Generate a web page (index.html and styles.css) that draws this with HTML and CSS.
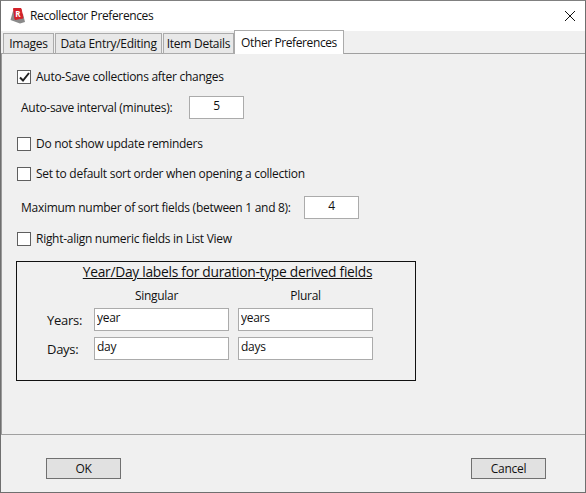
FILE: index.html
```html
<!DOCTYPE html>
<html lang="en">
<head>
    <meta charset="UTF-8">
    <title>Recollector Preferences</title>
    <link rel="stylesheet" href="styles.css">
</head>
<body>

    <div class="window">
        <!-- Title bar -->
        <div class="title-bar">
            <svg class="app-icon" width="16" height="16" viewBox="0 0 16 16">
                <path d="M3 3 L0.5 12 L10 15.5 L15 14 L13 6 Z" fill="#8a8a8a"/>
                <path d="M3.5 0.5 L11 0.5 L13 10 L5 11.5 Z" fill="#d3222a" stroke="#d3222a" stroke-linejoin="round"/>
                <text x="5.2" y="8.6" class="app-icon-letter">R</text>
            </svg>
            <span class="title-text">Recollector Preferences</span>
            <svg class="close-icon" width="10" height="10" viewBox="0 0 10 10">
                <path d="M0 0 L10 10 M10 0 L0 10" stroke="#111" stroke-width="1" fill="none"/>
            </svg>
        </div>

        <!-- Tabs -->
        <div class="tabs">
            <div class="tab tab-images">Images</div>
            <div class="tab tab-entry">Data Entry/Editing</div>
            <div class="tab tab-details">Item Details</div>
            <div class="tab tab-other active">Other Preferences</div>
        </div>

        <!-- Tab page -->
        <div class="page">
            <label class="check-row row-autosave">
                <span class="checkbox">
                    <svg width="11" height="10" viewBox="0 0 11 10">
                        <path d="M1 5.5 L4 8.5 L10 1" stroke="#222" stroke-width="2" fill="none"/>
                    </svg>
                </span>
                Auto-Save collections after changes
            </label>

            <div class="field-row row-interval">
                <label class="label-interval">Auto-save interval (minutes):</label>
                <input class="num-input" type="text" value="5">
            </div>

            <label class="check-row row-reminders"><span class="checkbox"></span>Do not show update reminders</label>
            <label class="check-row row-sort"><span class="checkbox"></span>Set to default sort order when opening a collection</label>

            <div class="field-row row-max">
                <label class="label-max">Maximum number of sort fields (between 1 and 8):</label>
                <input class="num-input" type="text" value="4">
            </div>

            <label class="check-row row-align"><span class="checkbox"></span>Right-align numeric fields in List View</label>

            <!-- Duration labels -->
            <div class="duration-box">
                <div class="duration-title"><span>Year/Day labels for duration-type derived fields</span></div>
                <div class="duration-grid">
                    <span></span>
                    <span class="col-head col-singular">Singular</span>
                    <span class="col-head">Plural</span>
                    <label class="row-head">Years:</label>
                    <input class="text-input" type="text" value="year">
                    <input class="text-input" type="text" value="years">
                    <label class="row-head">Days:</label>
                    <input class="text-input" type="text" value="day">
                    <input class="text-input" type="text" value="days">
                </div>
            </div>
        </div>

        <!-- Buttons -->
        <div class="footer">
            <button class="btn">OK</button>
            <button class="btn">Cancel</button>
        </div>
    </div>

</body>
</html>
```

FILE: styles.css
```css
/* Reset */
* {
    margin: 0;
    padding: 0;
    box-sizing: border-box;
}

body {
    width: 586px;
    height: 493px;
    overflow: hidden;
    font-family: 'Open Sans', 'Noto Sans', sans-serif;
    font-size: 12px;
    letter-spacing: -0.28px;
    color: #111;
    background: #f0f0f0;
}

input, button {
    font-family: inherit;
    font-size: inherit;
    letter-spacing: inherit;
    color: inherit;
}

/* Window frame */
.window {
    width: 586px;
    height: 493px;
    border: 1px solid #6f6f6f;
    border-top-color: #808080;
    display: flex;
    flex-direction: column;
}

/* Title bar */
.title-bar {
    height: 30px;
    flex: none;
    background: white;
    display: flex;
    align-items: center;
    padding-left: 9px;
    padding-right: 10px;
    padding-bottom: 1px;
}

.app-icon {
    margin-right: 4px;
}

.app-icon-letter {
    font-size: 8px;
    font-weight: bold;
    letter-spacing: 0;
    fill: white;
}

.title-text {
    flex: 1;
    letter-spacing: -0.38px;
    padding-bottom: 1px;
}

/* Tabs */
.tabs {
    height: 23px;
    flex: none;
    display: flex;
    align-items: flex-end;
    padding-left: 2px;
    border-bottom: 1px solid #a0a0a0;
}

.tab {
    height: 21px;
    margin-bottom: -1px;
    margin-right: 1px;
    border: 1px solid #ababab;
    background: #e8e8e8;
    display: flex;
    align-items: center;
    justify-content: center;
    padding-bottom: 1px;
}

.tab-images { width: 51px; }
.tab-entry { width: 107px; }
.tab-details { width: 71px; margin-right: 0; }

.tab-other {
    width: 110px;
    height: 24px;
    background: white;
    margin-right: 0;
    border-bottom: none;
    letter-spacing: -0.4px;
}

/* Tab page */
.page {
    height: 380px;
    flex: none;
    border-left: 1px solid #9a9a9a;
    padding-left: 15px;
    padding-top: 14px;
}

.check-row {
    display: flex;
    align-items: center;
    height: 16px;
}

.checkbox {
    width: 14px;
    height: 14px;
    flex: none;
    margin-top: 2px;
    margin-right: 5px;
    border: 1px solid #5f5f5f;
    background: white;
    display: flex;
    align-items: center;
    justify-content: center;
}

.field-row {
    display: flex;
    align-items: center;
    height: 23px;
    padding-left: 4px;
}

.label-interval { width: 168px; }
.label-max { width: 283px; }

.num-input {
    width: 55px;
    height: 23px;
    border: 1px solid #ababab;
    background: white;
    text-align: center;
    padding-bottom: 4px;
    outline: none;
}

.row-interval { margin-top: 12px; }
.row-reminders { margin-top: 16px; }
.row-sort { margin-top: 14px; }
.row-max { margin-top: 15px; }
.row-align { margin-top: 11px; }

/* Duration labels box */
.duration-box {
    width: 400px;
    height: 120px;
    margin-top: 15px;
    margin-left: -1px;
    border: 1px solid #111;
}

.duration-title {
    text-align: center;
    font-size: 13.8px;
    line-height: 18px;
    text-decoration: underline;
    padding-left: 23px;
    padding-top: 1px;
}

.duration-grid {
    display: grid;
    grid-template-columns: 68px 135px 135px;
    grid-template-rows: 13px 23px 23px;
    column-gap: 9px;
    row-gap: 6px;
    margin-top: 8px;
    align-items: center;
}

.col-head {
    text-align: center;
}

.col-singular {
    padding-right: 10px;
}

.row-head {
    font-size: 13px;
    padding-left: 30px;
}

.text-input {
    height: 23px;
    width: 135px;
    border: 1px solid #ababab;
    background: white;
    padding-left: 2px;
    padding-bottom: 4px;
    outline: none;
}

/* Footer */
.footer {
    flex: 1;
    border-top: 1px solid #a0a0a0;
    display: flex;
    justify-content: space-between;
    padding: 23px 39px 0 45px;
}

.btn {
    width: 75px;
    height: 21px;
    border: 1px solid #707070;
    background: #e1e1e1;
}
```
